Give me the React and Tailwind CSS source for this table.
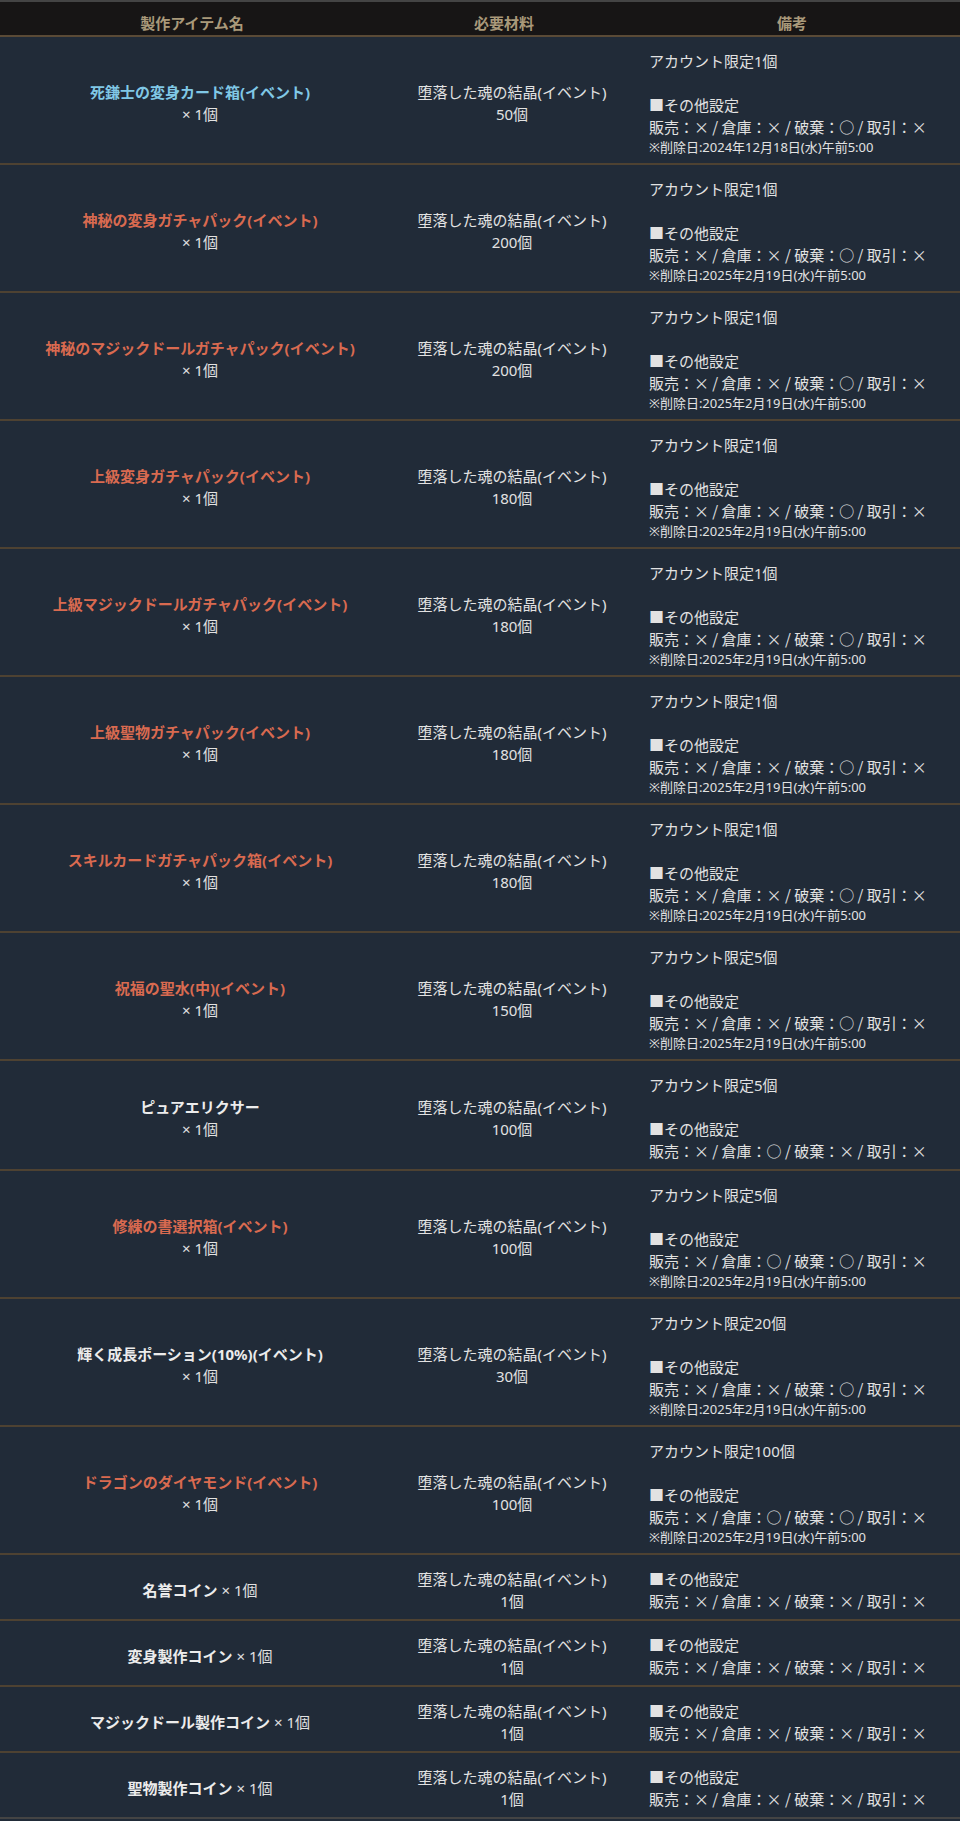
import React from 'react';

const RED = 'text-[#d96a50]';
const BLUE = 'text-[#80c8e6]';
const WHITE = 'text-[#ececec]';

const DEL = '※削除日:2025年2月19日(水)午前5:00';

const rows = [
  { name: '死鎌士の変身カード箱(イベント)', color: BLUE, qty: '50個', limit: 'アカウント限定1個', rule: '販売：× / 倉庫：× / 破棄：○ / 取引：×', del: '※削除日:2024年12月18日(水)午前5:00' },
  { name: '神秘の変身ガチャパック(イベント)', color: RED, qty: '200個', limit: 'アカウント限定1個', rule: '販売：× / 倉庫：× / 破棄：○ / 取引：×', del: DEL },
  { name: '神秘のマジックドールガチャパック(イベント)', color: RED, qty: '200個', limit: 'アカウント限定1個', rule: '販売：× / 倉庫：× / 破棄：○ / 取引：×', del: DEL },
  { name: '上級変身ガチャパック(イベント)', color: RED, qty: '180個', limit: 'アカウント限定1個', rule: '販売：× / 倉庫：× / 破棄：○ / 取引：×', del: DEL },
  { name: '上級マジックドールガチャパック(イベント)', color: RED, qty: '180個', limit: 'アカウント限定1個', rule: '販売：× / 倉庫：× / 破棄：○ / 取引：×', del: DEL },
  { name: '上級聖物ガチャパック(イベント)', color: RED, qty: '180個', limit: 'アカウント限定1個', rule: '販売：× / 倉庫：× / 破棄：○ / 取引：×', del: DEL },
  { name: 'スキルカードガチャパック箱(イベント)', color: RED, qty: '180個', limit: 'アカウント限定1個', rule: '販売：× / 倉庫：× / 破棄：○ / 取引：×', del: DEL },
  { name: '祝福の聖水(中)(イベント)', color: RED, qty: '150個', limit: 'アカウント限定5個', rule: '販売：× / 倉庫：× / 破棄：○ / 取引：×', del: DEL },
  { name: 'ピュアエリクサー', color: WHITE, qty: '100個', limit: 'アカウント限定5個', rule: '販売：× / 倉庫：○ / 破棄：× / 取引：×' },
  { name: '修練の書選択箱(イベント)', color: RED, qty: '100個', limit: 'アカウント限定5個', rule: '販売：× / 倉庫：○ / 破棄：○ / 取引：×', del: DEL },
  { name: '輝く成長ポーション(10%)(イベント)', color: WHITE, qty: '30個', limit: 'アカウント限定20個', rule: '販売：× / 倉庫：× / 破棄：○ / 取引：×', del: DEL },
  { name: 'ドラゴンのダイヤモンド(イベント)', color: RED, qty: '100個', limit: 'アカウント限定100個', rule: '販売：× / 倉庫：○ / 破棄：○ / 取引：×', del: DEL },
  { name: '名誉コイン', color: WHITE, qty: '1個', inline: true, rule: '販売：× / 倉庫：× / 破棄：× / 取引：×' },
  { name: '変身製作コイン', color: WHITE, qty: '1個', inline: true, rule: '販売：× / 倉庫：× / 破棄：× / 取引：×' },
  { name: 'マジックドール製作コイン', color: WHITE, qty: '1個', inline: true, rule: '販売：× / 倉庫：× / 破棄：× / 取引：×' },
  { name: '聖物製作コイン', color: WHITE, qty: '1個', inline: true, rule: '販売：× / 倉庫：× / 破棄：× / 取引：×' },
];

const Row = ({ row, last }) => (
  <div className={`grid grid-cols-[384px_240px_336px] ${last ? '' : 'border-b-2 border-[#4e4232]'}`}>
    {/* item name */}
    <div className="flex flex-col items-center justify-center text-center pl-[16px] pt-[13px] pb-[7px]">
      {row.inline ? (
        <div>
          <span className={`font-bold ${row.color}`}>{row.name}</span> × 1個
        </div>
      ) : (
        <>
          <div className={`font-bold ${row.color}`}>{row.name}</div>
          <div>× 1個</div>
        </>
      )}
    </div>

    {/* material */}
    <div className="flex flex-col items-center justify-center text-center pl-[16px] pt-[13px] pb-[7px]">
      <div>堕落した魂の結晶(イベント)</div>
      <div>{row.qty}</div>
    </div>

    {/* remarks */}
    <div className="flex flex-col justify-center pl-[25px] pt-[13px] pb-[7px]">
      {row.limit && (
        <>
          <div>{row.limit}</div>
          <div className="h-[22px]"></div>
        </>
      )}
      <div>■その他設定</div>
      <div className="font-['Noto_Sans_CJK_JP',sans-serif]">{row.rule}</div>
      {row.del && <div className="text-[13px] leading-[18px]">{row.del}</div>}
    </div>
  </div>
);

export default function App() {
  return (
    <div className="w-[960px] min-h-[1821px] bg-[#212b38] text-[#e2e2e2] text-[15px] leading-[22px] font-['Noto_Sans','Noto_Sans_CJK_JP',sans-serif]">
      <div className="border-t-2 border-[#444444] border-b-2 border-b-[#5a4a36] bg-[#171515] grid grid-cols-[384px_240px_336px] text-[#a9997a] font-bold text-[15px]">
        <div className="text-center pt-[10px] pb-[1px]">製作アイテム名</div>
        <div className="text-center pt-[10px] pb-[1px]">必要材料</div>
        <div className="text-center pt-[10px] pb-[1px]">備考</div>
      </div>

      {rows.map((row, i) => (
        <Row key={row.name} row={row} last={i === rows.length - 1} />
      ))}

      <div className="border-t-2 border-[#444444]"></div>
    </div>
  );
}
